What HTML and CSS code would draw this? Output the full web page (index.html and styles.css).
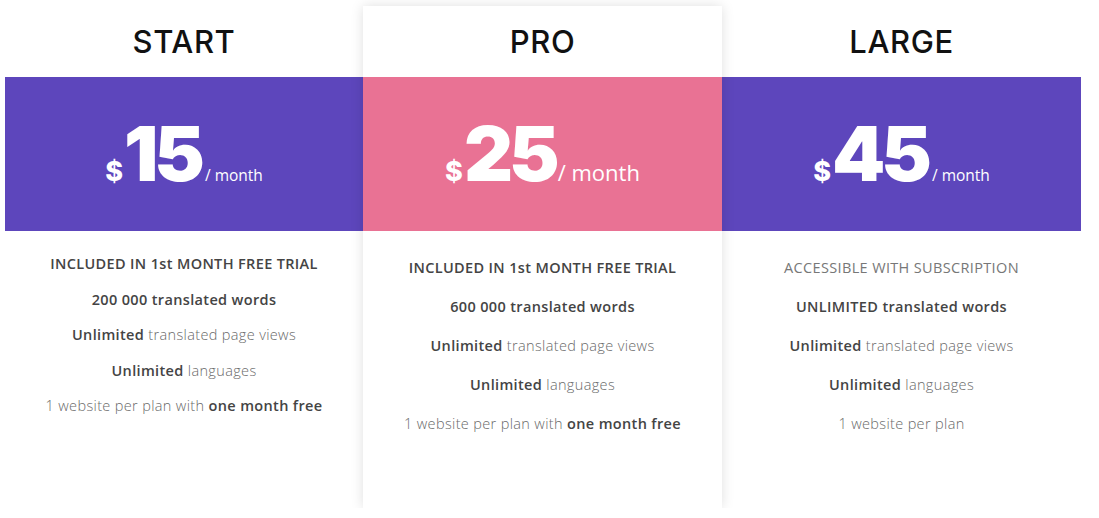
FILE: index.html
```html
<!DOCTYPE html>
<html>
<head>
<meta charset="utf-8">
<link rel="stylesheet" href="styles.css">
</head>
<body>
<div class="pricing">
  <div class="plan">
    <h2 class="plan-name">START</h2>
    <div class="band band-purple">
      <span class="cur">$</span><span class="amount">15</span><span class="per">/ month</span>
    </div>
    <div class="features compact">
      <p><b>INCLUDED IN 1st MONTH FREE TRIAL</b></p>
      <p><b>200 000 translated words</b></p>
      <p><b>Unlimited</b> translated page views</p>
      <p><b>Unlimited</b> languages</p>
      <p>1 website per plan with <b>one month free</b></p>
    </div>
  </div>
  <div class="plan featured">
    <h2 class="plan-name">PRO</h2>
    <div class="band band-pink">
      <span class="cur">$</span><span class="amount">25</span><span class="per per-big">/ month</span>
    </div>
    <div class="features">
      <p><b>INCLUDED IN 1st MONTH FREE TRIAL</b></p>
      <p><b>600 000 translated words</b></p>
      <p><b>Unlimited</b> translated page views</p>
      <p><b>Unlimited</b> languages</p>
      <p>1 website per plan with <b>one month free</b></p>
    </div>
  </div>
  <div class="plan">
    <h2 class="plan-name">LARGE</h2>
    <div class="band band-purple">
      <span class="cur">$</span><span class="amount">45</span><span class="per">/ month</span>
    </div>
    <div class="features">
      <p class="upper">ACCESSIBLE WITH SUBSCRIPTION</p>
      <p><b>UNLIMITED translated words</b></p>
      <p><b>Unlimited</b> translated page views</p>
      <p><b>Unlimited</b> languages</p>
      <p>1 website per plan</p>
    </div>
  </div>
</div>
</body>
</html>
```

FILE: styles.css
```css
* { box-sizing: border-box; }
html, body { margin: 0; padding: 0; background: #fff; }
body {
  font-family: "Open Sans", "Noto Sans", sans-serif;
  color: #666;
}
.pricing {
  display: grid;
  grid-template-columns: 358px 359px 359px;
  margin: 6px 0 0 5px;
  width: 1076px;
}
.plan {
  display: flex;
  flex-direction: column;
  height: 502px;
}
.featured {
  background: #fff;
  box-shadow: 0 0 12px rgba(0,0,0,0.13);
  position: relative;
  z-index: 1;
}
.plan-name {
  margin: 0;
  height: 71px;
  display: flex;
  align-items: center;
  justify-content: center;
  font-family: "Inter", sans-serif;
  font-size: 31px;
  font-weight: 500;
  color: #111;
  letter-spacing: 0.6px;
}
.band {
  height: 154px;
  display: flex;
  align-items: baseline;
  justify-content: center;
  color: #fff;
  padding-top: 38px;
}
.band-purple { background: #5d46bc; }
.band-pink { background: #e97294; }
.cur {
  font-family: "Inter", sans-serif;
  font-weight: 800;
  font-size: 27px;
  margin-right: 1px;
}
.amount {
  font-family: "Inter", sans-serif;
  font-weight: 900;
  font-size: 76px;
  line-height: 76px;
  letter-spacing: -4px;
}
.per {
  font-size: 15.5px;
  font-weight: 400;
  margin-left: 4px;
}
.per-big {
  font-size: 22px;
  margin-left: 2px;
}
.features {
  display: flex;
  flex-direction: column;
  align-items: center;
  padding-top: 27px;
  gap: 19px;
}
.features.compact {
  padding-top: 23px;
  gap: 15.5px;
}
.features p {
  margin: 0;
  line-height: 20px;
  font-size: 14.5px;
  font-weight: 300;
  letter-spacing: 0.35px;
  color: #6a6a6a;
  white-space: nowrap;
}
.features b {
  font-weight: 600;
  color: #444;
}
.features .upper {
  color: #777;
  font-weight: 400;
}
```
